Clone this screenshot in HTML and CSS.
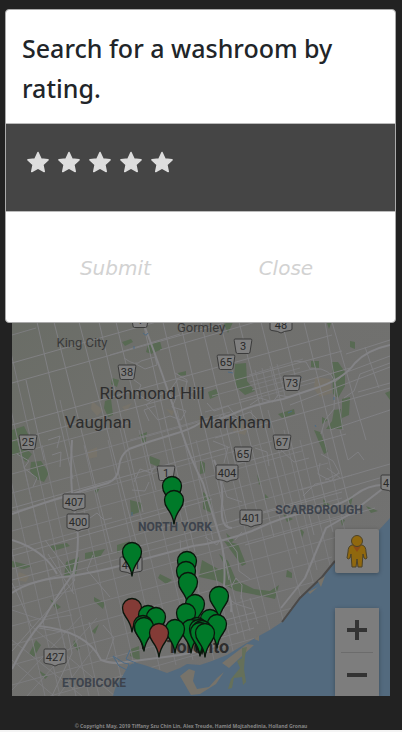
FILE: index.html
```html
<!DOCTYPE html>
<html lang="en">
<head>
<meta charset="utf-8">
<meta name="viewport" content="width=device-width, initial-scale=1">
<title>Washroom finder</title>
<link rel="stylesheet" href="styles.css">
</head>
<body>
<div class="page">
  <main class="map">
    <svg class="map-art" viewBox="12 250 378 446" role="img" aria-label="Map of washrooms around Toronto">
      <defs>
        <linearGradient id="relief" x1="0" y1="0" x2="1" y2="1">
          <stop offset="0" stop-color="#686c64"/><stop offset=".35" stop-color="#70706d"/><stop offset="1" stop-color="#727272"/>
        </linearGradient>
        <g id="pin">
          <path d="M0 24.500C-.6 17-3.200 13-6.500 8.500C-8.500 5.800-9.500 3.300-9.500 0A9.500 9.500 0 0 1 9.500 0C9.500 3.300 8.500 5.800 6.500 8.500C3.200 13 .6 17 0 24.500Z" stroke="#0a160c" stroke-width="1.300"/>
        </g>
        <path id="trapezoid" d="M-8-7H8Q9-7 8.800-5.500L7 6Q6.800 7.500 5.500 7.500H-5.500Q-6.800 7.500-7 6L-8.800-5.500Q-9-7-8-7Z"/>
        <path id="shield" d="M-10-8H10Q11-8 11-6.500V5Q11 6.300 9 6.500Q3 7 0 9Q-3 7-9 6.500Q-11 6.300-11 5V-6.500Q-11-8-10-8Z"/>
      </defs>
      <rect x="12" y="250" width="378" height="446" fill="url(#relief)"/>

      <g class="park">
        <path d="M12 430l12-4 5 10-4 12 7 6-6 8-8-8-6 2z"/>
        <path d="M31 462l10-1 8 12-5 9-8-3-6-8z"/>
        <path d="M122 342l9-3 2 3-8 4zM148 345l12-4 2 8-11 5-5-2zM178 373l8-2v4l-7 1z"/>
        <path d="M112 378l7 2-2 7-6-3zM105 401l6-2 2 16-5 2-4-9z"/>
        <path d="M235 364l11-1 1 18 8 10-10 4-8-7-3-9zM208 392l8-3 3 6-9 4z"/>
        <path d="M223 322l11-2-6 13zM325 317l8 1-4 11zM311 361h8v7l-8-1zM332 362h6l7 10v14l-7 12-5-4z"/>
        <path d="M350 341l5 1v7l-5-2zM342 399l8-2-1 18-7 3zM334 410l7-1 2 20h-17l6-8z"/>
        <path d="M278 414l16-5 1 5-13 4zM322 417l6 3-6 4zM385 393l5-2v9z"/>
        <path d="M139 435l8-3-2 14zM150 456l10 4-1 7-10-4zM130 500l12 3-2 9-9 3z"/>
        <path d="M314 430l6 2 8 20-4 2zM257 474l4 9-2 2zM265 494l4 4-4 2zM200 460l5 3v10l-5 1zM203 492l7 5 2 16-9-4z"/>
        <path d="M50 546l17-3 3 3-17 5zM66 562l13-5-3 17-12 3zM85 553l20-4-5 8-15 2zM117 545l13-4 2 5-15 7z"/>
        <path d="M12 561l20 5-8 3-12-2zM50 599l11 8-5 3zM94 597l11 6-2 6-9-8zM99 624l-4 10-3-3zM36 640l-7 14 5 3 7-12z"/>
        <path d="M74 640l6 8-2 3-5-6zM38 670l10 6-3 3zM131 649l8-3 1 15-10-5z"/>
        <path d="M202 560l18 10 5-4-6-12 9 7 8 19 18 9 16 2 9-6-4 14-13-3-26-5-18-10-19-4z"/>
        <path d="M224 541l14 3 8 20-4 2zM287 570l5 3v5l-6-1zM283 514l10 5-6 3zM226 533l8 7-4 4zM347 500l6-5-2 10zM366 506l12 5-7 2z"/>
        <path d="M300 528l4 4-2 6zM323 499l7 6-6 5zM340 518l5 2-3 6zM160 574l12 6-6 4-8-6zM94 490l6-3-3 7z"/>
      </g>
      <g class="sand">
        <path d="M92 401l11 9-6 6-6-7zM122 407l10-4-6 9zM88 451l9-4v10l-9 2zM315 377l15 2 2 14-12 4-6-8zM19 572l10 4-3 6-10-2zM235 422l14 4-4 9-12-3zM166 409l8 2-2 5z"/>
      </g>

      <g class="minor">
        <path d="M12 335l24-7M-40 322l85 374M-25 322l85 374M-9 322l85 374M4 322l85 374M18 440l58 256M42 445l57 251M60 400l65 296M84 445l50 220M108 440l52 230M118 420l58 245M139 430l54 230M154 400l60 260M177 410l57 245M196 440l49 200M218 420l52 210M235 420l48 200M251 410l50 188M268 410l45 172M284 430l33 140M300 440l30 125M322 430l25 110"/>
        <path d="M12 455l120-33M12 474l190-53M12 493l225-62M12 512l260-71M12 531l290-80M12 550l316-87M12 569l340-94M12 588l330-90M12 607l350-97M12 626l336-92M12 645l320-88M12 665l302-83M12 685l284-78M50 696l220-62M130 440l100-28M205 412l110-30M212 396l104-28"/>
        <path d="M249 375l54-16M250 382l50-14M252 390l47-13M255 370l8 32M262 368l8 32M270 366l8 32M277 364l8 32"/>
        <path d="M12 640l70 56M12 660l42 36M30 625l85 71M12 690l70-75M27 696l70-78M58 696l36-48M12 610l30 10 30-5"/>
      </g>
      <g class="road">
        <path d="M37 322l36 157M54 322l58 230M79 322l60 230M99 322l44 190M116 322l40 168M143 322l52 230M163 322l50 218M180 322l48 206M201 322l46 190M220 322l54 215M239 322l58 232M261 322l53 213M282 322l51 210M304 322l47 190M325 322l18 108M332 322l34 118M26 380l18 80M365 347l14 41"/>
        <path d="M12 363l155-44M12 383l230-65M12 425l320-90M110 355l70-21M160 350l130-38M12 441l330-90M346 354l44-14M215 438l175-50M290 405l100-38M358 392l32-9M240 400l110-32M330 430l60-20M12 508l218-61M230 466l116-32M300 490l90-26M235 520l155-45M12 556l200-57M245 545l130-37M12 580l330-88"/>
        <path d="M124 358q12 9 17 3l14-4 2 8-12 4-9-5M130 377l11 8-4 9 11 7 8-6M146 405l13-10 8-3 9 6-4 9 14 4-5 9-11-4-12 4zM175 373l12 7-2 12 10 8M170 390l8-11 10 3M149 421l-5-11 11-4M207 403l7 8 14-5 9 11 13-5 8 8M213 425l9-11 15 5 4 12 13-6M250 405l10-7 13 4 5-7 11 2M134 482l6-13 11 4 4-7M132 490l13 1 4-9M90 518l7-5 7 7 8-2M17 454l12 7-5 7 13 10-4 9M48 440l12-4-3 12M52 455l9-3-1 15"/>
        <path d="M294 361l12 1 4 7h11q14 4 14 18l-1 22-9 11-4 14M335 382l12-10 43-16M344 398l10-7 6-17 30-11M213 441l15 6-4 16M225 468l-4 10 6 19 15 5M321 454l12 7 6 11-8 9-13-7 2-11M325 480l15-7M327 468l13 10M255 448l12 4 2 14M281 450l13 12 15-4M303 496l12-12 21-4M340 430l8 30 10-8 6 8"/>
        <path d="M228 540l9 12 2 19 11 8M225 559l4 21M235 540l7-8M231 587l5-9 6 7-1 14M216 590l20 14 16 5M205 537l12 8 4-7M48 554l26 40M77 557l-5 35M103 625l11 13-8 22M89 622l9 34"/>
        <path d="M45 540l30 40-42 47-21 24M31 626q-10-26-19-43M39 628l29 5 4 20-20 43M93 555l-6 15 23 27M180 540l9 112M195 555l10 94M225 635l-6-40M238 634l-9-37M250 631l-9-36M258 624l-8-26M213 640l41-12M218 622l38-10"/>
      </g>
      <g class="highway">
        <path d="M12 514q45-16 96-31 10-4 11-16t10-18q21-8 42-14t29-12q20-3 35-10 20-9 48-14l30-10q30-9 42-26 12-13 35-18"/>
        <path d="M12 593q20-14 60-17 41-7 72-17l49-13q30-4 59-15 30-15 68-22 24-5 35-14 15-12 35-10"/>
        <path d="M72 440q-3 50 4 79 5 27-3 55-20 27-30 47-16 17-31 48M143 322q21 55 38 108 10 30 22 53l18 58q5 21 3 46 9 11 7 25"/>
        <path d="M214 460q10 22 8 45t10 23M12 540q32 10 45 34M39 626q48 5 62 34 14 5 25 2l39-5q30-3 55-13"/>
        <path d="M390 483l-40 31-24 14-21 50-24 30"/>
      </g>

      <path class="water" d="M390 518L379 530L335 561L322 577Q312 589 300 598Q292 607 282 622Q271 630 257 637L227 655Q213 661 200 665L187 664L180 668L167 673L153 668Q145 665 137 663Q130 663 127 668L122 677Q116 683 113 696H390Z"/>
      <path d="M335 561l-13 16-22 21-18 24" fill="none" stroke="#4b4948" stroke-width="2"/>
      <path class="sand" d="M222 663l25-19 7 1-25 23zM180 676l9-7 6 2-2 10 4 8 12-2 8-9 7-6-8 12-16 10-9 1zM254 639l5-4v6zM318 581l7-5-4 11zM308 592l10-5-8 7z"/>
      <path class="spit" d="M242 648l5-1-2 9-1 13 2 13-3 3-1-8-8 1-2 10-4 1 3-10 9-11-3-7 5-3z"/>
      <g class="stream">
        <path d="M113 656l11 7 5 1-2 6-8-4zM130 650l-4 9 10 4M143 333q3 4 5 0M134 346v3M132 512v4M228 372l5 1M301 377v1M288 413l4-2M334 397v3M315 425l1 2"/>
      </g>

      <g class="badge">
        <use href="#trapezoid" x="140" y="320"/><text x="140" y="324">1</text>
        <use href="#shield" x="281" y="324"/><text x="281" y="329">48</text>
        <use href="#trapezoid" x="127" y="372"/><text x="127" y="376">38</text>
        <use href="#trapezoid" x="243" y="346"/><text x="243" y="350">3</text>
        <use href="#trapezoid" x="226" y="362"/><text x="226" y="366">65</text>
        <use href="#trapezoid" x="292" y="383"/><text x="292" y="387">73</text>
        <use href="#trapezoid" x="28" y="442"/><text x="28" y="446">25</text>
        <use href="#trapezoid" x="282" y="442"/><text x="282" y="446">67</text>
        <use href="#trapezoid" x="243" y="454"/><text x="243" y="458">65</text>
        <use href="#trapezoid" x="166" y="473"/><text x="166" y="477">1</text>
        <use href="#shield" x="74" y="502"/><text x="74" y="506">407</text>
        <use href="#shield" x="78" y="522"/><text x="78" y="526">400</text>
        <use href="#shield" x="227" y="473"/><text x="227" y="477">404</text>
        <use href="#shield" x="251" y="518"/><text x="251" y="522">401</text>
        <use href="#shield" x="392" y="483"/><text x="386" y="487">4</text>
        <use href="#shield" x="131" y="565"/><text x="131" y="569">401</text>
        <use href="#shield" x="55" y="657"/><text x="55" y="661">427</text>
      </g>
      <g class="place">
        <text class="town" x="82" y="347">King City</text>
        <text class="town" x="201" y="332">Gormley</text>
        <text class="city" x="152" y="399">Richmond Hill</text>
        <text class="city" x="98" y="428">Vaughan</text>
        <text class="city" x="235" y="428">Markham</text>
        <text class="district" x="175" y="531">NORTH YORK</text>
        <text class="district" x="319" y="514">SCARBOROUGH</text>
        <text class="district" x="94" y="687">ETOBICOKE</text>
        <text class="capital" x="198" y="653">Toronto</text>
      </g>
      <g class="pins">
        <use href="#pin" x="172" y="486"/><use href="#pin" x="174" y="500"/>
        <use href="#pin" x="132" y="552"/>
        <use href="#pin" x="187" y="561"/><use href="#pin" x="186" y="571"/><use href="#pin" x="188" y="582"/>
        <use href="#pin" x="219" y="596"/><use href="#pin" x="195" y="604"/>
        <use class="closed" href="#pin" x="132" y="608"/>
        <use href="#pin" x="186" y="613"/><use href="#pin" x="148" y="615"/><use href="#pin" x="156" y="617"/>
        <use href="#pin" x="210" y="619"/><use href="#pin" x="217" y="624"/>
        <use href="#pin" x="143" y="625"/><use href="#pin" x="144" y="627"/>
        <use href="#pin" x="197" y="627"/><use href="#pin" x="191" y="629"/><use href="#pin" x="175" y="629"/>
        <use href="#pin" x="199" y="629"/><use href="#pin" x="202" y="630"/><use href="#pin" x="200" y="632"/>
        <use href="#pin" x="205" y="633"/>
        <use class="closed" href="#pin" x="159" y="633"/>
      </g>
    </svg>
    <div class="controls">
      <button class="control pegman" type="button" aria-label="Street View">
        <svg width="22" height="34" viewBox="0 0 22 34">
          <path d="M6 11Q2 12 2 18L1 24Q2 26 4 24L5 20L6 33H10L11 25L12 33H16L17 20L18 24Q20 26 21 24L20 18Q20 12 16 11Z" fill="#90680e" stroke="#4c4229"/>
          <path d="M7 12H15L11 18Z" fill="#8d4c16"/>
          <circle cx="11" cy="7" r="5.500" fill="#90680e" stroke="#4c4229"/>
        </svg>
      </button>
      <div class="zoom">
        <button class="control" type="button" aria-label="Zoom in">
          <svg width="20" height="20" viewBox="0 0 20 20"><path d="M8 0h4v8h8v4h-8v8H8v-8H0V8h8z" fill="#333"/></svg>
        </button>
        <button class="control" type="button" aria-label="Zoom out">
          <svg width="20" height="20" viewBox="0 0 20 20"><path d="M0 9h20v4H0z" fill="#333"/></svg>
        </button>
      </div>
    </div>
  </main>
  <footer class="footer">© Copyright May, 2019 Tiffany Szu Chin Lin, Alex Treude, Hamid Mojtahedinia, Holland Gronau</footer>
</div>

<form class="modal" role="dialog" aria-labelledby="modal-title">
  <svg class="sprite" aria-hidden="true">
    <symbol id="star" viewBox="0 0 22 21"><path d="M11 1L14 7.500L21 8.300L15.800 13.100L17.200 20L11 16.600L4.800 20L6.200 13.100L1 8.300L8 7.500Z" fill="#ddd" stroke="#ddd" stroke-width="1.600" stroke-linejoin="round"/></symbol>
  </svg>
  <h1 class="modal-title" id="modal-title">Search for a washroom by rating.</h1>
  <div class="rating" role="radiogroup" aria-label="Rating">
    <label class="star"><input type="radio" name="rating" value="1" aria-label="1 star"><svg><use href="#star"/></svg></label>
    <label class="star"><input type="radio" name="rating" value="2" aria-label="2 stars"><svg><use href="#star"/></svg></label>
    <label class="star"><input type="radio" name="rating" value="3" aria-label="3 stars"><svg><use href="#star"/></svg></label>
    <label class="star"><input type="radio" name="rating" value="4" aria-label="4 stars"><svg><use href="#star"/></svg></label>
    <label class="star"><input type="radio" name="rating" value="5" aria-label="5 stars"><svg><use href="#star"/></svg></label>
  </div>
  <div class="actions">
    <button type="submit">Submit</button>
    <button type="button">Close</button>
  </div>
</form>
</body>
</html>
```
FILE: styles.css
```css
* { box-sizing: border-box; }

body {
  margin: 0;
  background: #f4f4f4;
  font-family: "Noto Sans", sans-serif;
}

.page {
  padding: 250px 12px 0;
  background: #222;
}

.map {
  position: relative;
  overflow: hidden;
}

.map-art {
  display: block;
  width: 100%;
  height: auto;
  font-family: Roboto, sans-serif;
  text-anchor: middle;
}

.park { fill: #586a53; }
.sand { fill: #77736a; }
.spit { fill: #65705a; }
.water { fill: #536a7e; }
.minor, .road, .highway, .stream { fill: none; stroke-linejoin: round; }
.minor { stroke: #7c7c7e; stroke-width: 1; }
.road { stroke: #808083; stroke-width: 1; }
.highway { stroke: #838386; stroke-width: 2; }
.stream { stroke: #4d6b86; stroke-width: 1; }

.badge use { fill: #808080; stroke: #3b3b3b; }
.badge text { fill: #292929; font-size: 11px; }

.place text { fill: #2d2d2d; }
.place .town { fill: #3a3a3a; font-size: 13px; }
.place .city { font-size: 17px; }
.place .capital { font-size: 18px; font-weight: 700; }
.place .district { fill: #3d434c; font-size: 12px; font-weight: 700; }

.pins { fill: #007a29; }
.pins .closed { fill: #833b36; }

.controls {
  position: absolute;
  right: 11px;
  bottom: 0;
  display: grid;
  gap: 35px;
}

.control {
  display: grid;
  place-items: center;
  width: 44px;
  height: 44px;
  padding: 0;
  border: 0;
  background: #7d7d7d;
}

.pegman, .zoom {
  border-radius: 2px;
  box-shadow: 0 1px 4px rgba(0, 0, 0, .3);
}

.zoom .control + .control {
  background: linear-gradient(#6c6c6c, #6c6c6c) center top / 32px 1px no-repeat #7d7d7d;
}

.footer {
  padding: 26px 20px 0 0;
  color: #858585;
  font-size: 5px;
  font-weight: 700;
  line-height: 8px;
  text-align: center;
}

.modal {
  position: absolute;
  top: 9px;
  right: 6px;
  left: 5px;
  overflow: hidden;
  border: 1px solid #aaa;
  border-radius: 4px;
  background: #fff;
}

.sprite {
  position: absolute;
  width: 0;
  height: 0;
}

.modal-title {
  margin: 0;
  padding: 18px 16px 15px;
  color: #212529;
  font-size: 25px;
  font-weight: 500;
  line-height: 40px;
}

.rating {
  display: flex;
  gap: 9px;
  padding: 27px 21px 38px;
  border-top: 1px solid #bbb;
  border-bottom: 1px solid #bbb;
  background: #454545;
}

.star {
  position: relative;
  height: 22px;
}

.star input {
  position: absolute;
  inset: 0;
  margin: 0;
  opacity: 0;
}

.star svg {
  display: block;
  width: 22px;
  height: 22px;
}

.actions {
  display: flex;
  justify-content: space-around;
  padding: 40px 28px 38px 20px;
}

.actions button {
  padding: 0;
  border: 0;
  background: none;
  color: #d2d2d2;
  font: italic 20px/32px "DejaVu Sans", sans-serif;
}
```
